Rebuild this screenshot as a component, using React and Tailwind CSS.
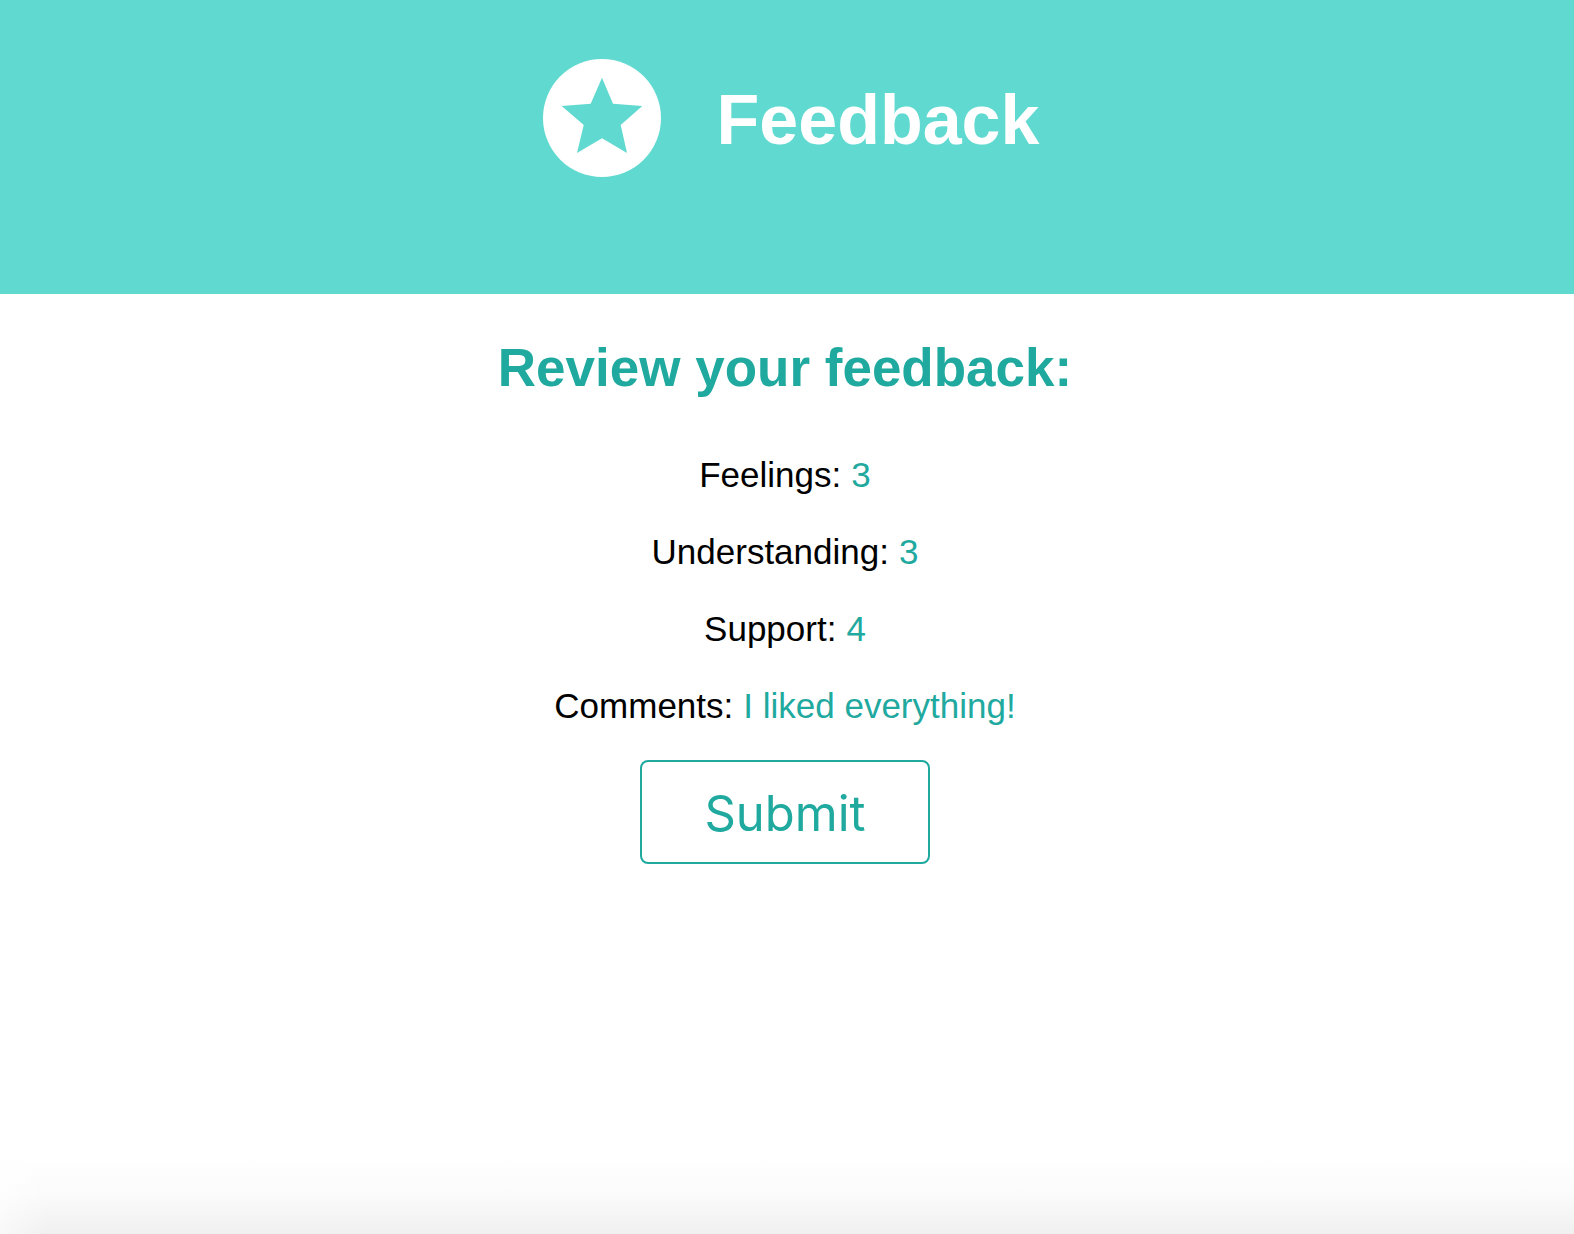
const answers = [
  { label: "Feelings", value: "3" },
  { label: "Understanding", value: "3" },
  { label: "Support", value: "4" },
  { label: "Comments", value: "I liked everything!" },
];

function StarBadge() {
  return (
    <svg viewBox="0 0 118 118" className="size-[118px] shrink-0" aria-hidden="true">
      <circle cx="59" cy="59" r="59" className="fill-white" />
      <polygon
        className="fill-[#60dad0]"
        points="59,18.7 70,44.7 99.3,47 77.7,66 84,94 59,79.3 34,94 40.7,66 18.7,47 47.7,44.7"
      />
    </svg>
  );
}

export default function App() {
  return (
    <div className="flex min-h-screen flex-col bg-white font-['Liberation_Sans',Arial,sans-serif] text-black">
      <header className="flex items-start justify-center gap-14 bg-[#60dad0] pt-[59px] pb-[115px] pl-2">
        <StarBadge />
        <h1 className="pt-0.5 text-[70px] leading-[118px] font-bold text-white">Feedback</h1>
      </header>

      <main className="flex flex-col items-center pr-1 text-center">
        <h2 className="pt-11 text-[53px] leading-[60px] font-bold text-[#1fa99f]">
          Review your feedback:
        </h2>
        <dl className="flex flex-col gap-9 pt-14 text-[35px] leading-[41px]">
          {answers.map(({ label, value }) => (
            <div key={label} className="flex justify-center gap-2.5">
              <dt>{label}:</dt>
              <dd className="text-[#1fa99f]">{value}</dd>
            </div>
          ))}
        </dl>
        <button
          type="button"
          className="mt-[34px] rounded-lg border-2 border-[#1fa99f] bg-white px-[62px] pt-[22px] pb-[18px] font-[Inter,sans-serif] text-[49px] leading-[60px] text-[#1fa99f]"
        >
          Submit
        </button>
      </main>

      <div className="mt-auto h-20 bg-linear-to-b from-white via-[#fbfbfb] to-[#f0f0f0]">
        <div className="h-full w-12 bg-linear-to-r from-white/60 to-transparent" />
      </div>
    </div>
  );
}
